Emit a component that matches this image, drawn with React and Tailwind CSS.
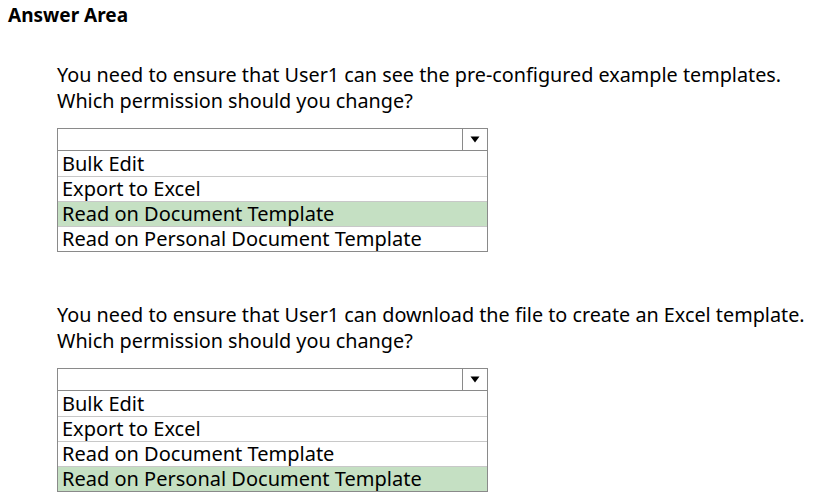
import React from 'react';

const options = ['Bulk Edit', 'Export to Excel', 'Read on Document Template', 'Read on Personal Document Template'];

const Dropdown = ({ selected }) => (
  <div className="w-[431px] border border-[#8a8a8a] bg-white">
    <div className="flex h-[22px] border-b border-[#8a8a8a]">
      <div className="flex-1" />
      <div className="flex w-[25px] items-center justify-center border-l border-[#8a8a8a]">
        <svg width="10" height="7" viewBox="0 0 10 7">
          <polygon points="0.5,0.5 9.5,0.5 5,6.5" fill="#000" />
        </svg>
      </div>
    </div>
    {options.map((opt, i) => (
      <div
        key={opt}
        className={`flex h-[25px] items-center pl-[4px] text-[20px] leading-none text-black ${i > 0 ? 'border-t border-[#c8c8c8]' : ''} ${i === selected ? 'bg-[#c5e0c3]' : ''}`}
      >
        {opt}
      </div>
    ))}
  </div>
);

const Question = ({ text, selected }) => (
  <section>
    <div className="text-[19.8px] leading-[26px] text-black">
      <p>{text}</p>
      <p>Which permission should you change?</p>
    </div>
    <div className="mt-[14px]">
      <Dropdown selected={selected} />
    </div>
  </section>
);

export default function App() {
  return (
    <div className="h-[496px] w-[815px] bg-white font-['Noto_Sans',sans-serif]">
      <h1 className="pl-[8px] pt-[3px] text-[19px] font-bold leading-[24px] text-black">Answer Area</h1>
      <div className="flex flex-col gap-[50px] pl-[57px] pt-[35px]">
        <Question text="You need to ensure that User1 can see the pre-configured example templates." selected={2} />
        <Question text="You need to ensure that User1 can download the file to create an Excel template." selected={3} />
      </div>
    </div>
  );
}
